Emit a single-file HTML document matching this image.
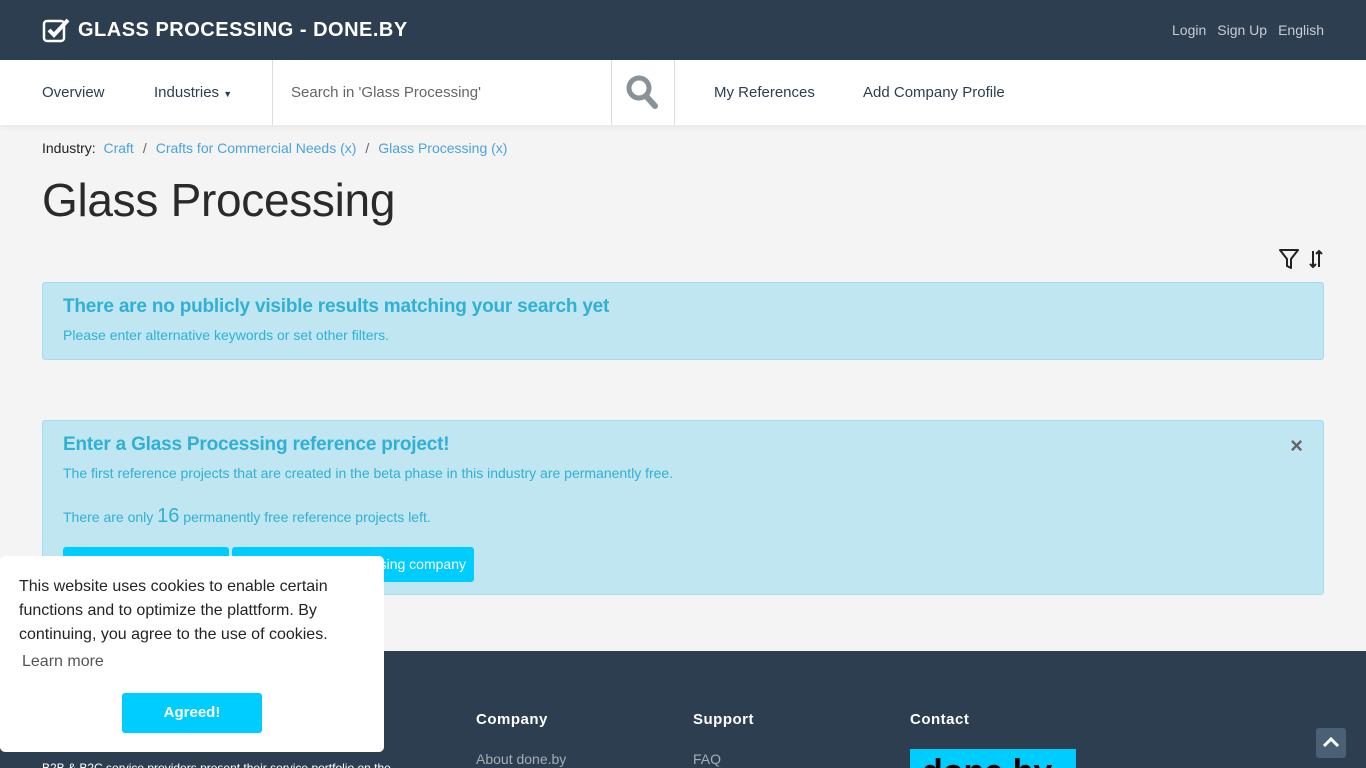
<!DOCTYPE html>
<html style="overflow:hidden"><head><meta charset="utf-8"><style>
*{box-sizing:border-box;margin:0;padding:0}
html,body{width:1366px;height:768px;overflow:hidden}
body{background:#f4f4f4;font-family:"Liberation Sans",sans-serif;position:relative}
.top{height:60px;background:#2c3e50;position:relative}
.brand{position:absolute;left:42px;top:17px;color:#fff;font-weight:bold;font-size:20px;letter-spacing:0.5px;display:flex;align-items:center;gap:8px}
.tr{position:absolute;right:42px;top:22px;font-size:14px;color:#c8ccd2}
.tr span{margin-left:11px}
.nav{height:65px;background:#fff;position:relative;box-shadow:0 2px 6px rgba(0,0,0,.06)}
.nav .it{position:absolute;top:24px;font-size:15px;color:#2c3e50}
.search{position:absolute;left:272px;top:0;width:340px;height:65px;border-left:1px solid #ddd;border-right:1px solid #ddd;padding:24px 18px;color:#666;font-size:15px}
.sbtn{position:absolute;left:611px;top:0;width:64px;height:65px;border-right:1px solid #ddd}
.bc{position:absolute;left:42px;top:140px;font-size:14px;color:#222}
.bc a{color:#4aa3df;text-decoration:none}
.bc i{font-style:normal;color:#666;margin:0 9px}
h1{position:absolute;left:42px;top:173px;font-size:46px;font-weight:normal;color:#2a2a2a;letter-spacing:-0.3px}
.alert{position:absolute;left:42px;width:1282px;background:#bfe6f1;border:1px solid #a6dcee;border-radius:3px;color:#31b0d5;padding:0 20px}
.alert h4{font-size:19px;font-weight:bold;margin-top:13px;letter-spacing:-0.2px}
.alert p{font-size:14px}
.btn{position:absolute;top:126px;height:35px;background:#00cdff;border-radius:3px;color:#fff;font-size:14px;padding:9px 13px;text-align:right;white-space:nowrap;overflow:hidden}
.foot{position:absolute;top:651px;left:0;width:1366px;height:117px;background:#2c3e50;overflow:hidden}
.foot h5{position:absolute;top:60px;color:#fff;font-size:15px;font-weight:bold;letter-spacing:.5px}
.foot .l{position:absolute;top:100px;color:#a5adb8;font-size:14px}
.cookie{position:absolute;left:0;top:556px;width:384px;height:196px;background:#fff;border-radius:5px;padding:19px 19px;color:#232323;font-size:16px;line-height:24px}
.agree{position:absolute;left:122px;top:137px;width:140px;height:40px;background:#00cdff;border-radius:3px;color:#fff;font-weight:bold;font-size:15px;text-align:center;line-height:40px}
.up{position:absolute;left:1316px;top:728px;width:30px;height:30px;background:#4a6075;border-radius:3px}
</style></head><body>
<div class="top">
<div class="brand"><svg width="28" height="26" viewBox="0 0 28 26"><rect x="2" y="4" width="20" height="20" rx="3" fill="none" stroke="#fff" stroke-width="2.5"/><path d="M7 13l5 5L26 3" fill="none" stroke="#fff" stroke-width="4"/></svg>GLASS PROCESSING - DONE.BY</div>
<div class="tr"><span>Login</span><span>Sign Up</span><span>English</span></div>
</div>
<div class="nav">
<div class="it" style="left:42px">Overview</div>
<div class="it" style="left:154px">Industries <span style="font-size:9px">▼</span></div>
<div class="search">Search in 'Glass Processing'</div>
<div class="sbtn"><svg width="64" height="65" viewBox="0 0 64 65"><circle cx="28" cy="28" r="10" fill="none" stroke="#8a9299" stroke-width="5"/><path d="M35 36l9 10" stroke="#8a9299" stroke-width="6" stroke-linecap="round"/></svg></div>
<div class="it" style="left:714px">My References</div>
<div class="it" style="left:863px">Add Company Profile</div>
</div>
<div class="bc">Industry: &nbsp;<a>Craft</a><i>/</i><a>Crafts for Commercial Needs (x)</a><i>/</i><a>Glass Processing (x)</a></div>
<h1>Glass Processing</h1>
<svg style="position:absolute;left:1278px;top:247px" width="48" height="24" viewBox="0 0 48 24"><path d="M2 3h18l-7 9v9l-4-2v-7z" fill="none" stroke="#222" stroke-width="2" stroke-linejoin="round"/><path d="M35 4v16m-3-3l3 3 3-3M41 20V4m-3 3l3-3 3 3" fill="none" stroke="#222" stroke-width="2"/></svg>
<div class="alert" style="top:282px;height:78px"><h4>There are no publicly visible results matching your search yet</h4><p style="margin-top:9px">Please enter alternative keywords or set other filters.</p></div>
<div class="alert" style="top:420px;height:175px"><h4>Enter a Glass Processing reference project!</h4>
<span style="position:absolute;right:20px;top:12px;color:#666;font-size:22px;font-weight:bold">×</span>
<p style="margin-top:9px">The first reference projects that are created in the beta phase in this industry are permanently free.</p>
<p style="margin-top:24px">There are only <span style="font-size:20px">16</span> permanently free reference projects left.</p>
<div class="btn" style="left:20px;width:166px">Create reference</div>
<div class="btn" style="left:189px;width:242px">Register glass processing company</div>
</div>
<div class="foot">
<h5 style="left:476px">Company</h5><h5 style="left:693px">Support</h5><h5 style="left:910px">Contact</h5>
<div class="l" style="left:476px">About done.by</div><div class="l" style="left:693px">FAQ</div>
<div style="position:absolute;left:910px;top:98px;width:166px;height:19px;background:#00cdff;overflow:hidden"><span style="position:absolute;left:12px;top:4px;font-size:34px;font-weight:bold;color:#000">done.by</span></div>
<div style="position:absolute;left:42px;top:110px;color:#fff;font-size:12px">B2B &amp; B2C service providers present their service portfolio on the</div>
</div>
<div class="cookie">This website uses cookies to enable certain functions and to optimize the plattform. By continuing, you agree to the use of cookies.<div style="color:#555;margin-top:3px;margin-left:3px">Learn more</div><div class="agree">Agreed!</div></div>
<div class="up"><svg width="30" height="30"><path d="M8 18l7-7 7 7" fill="none" stroke="#fff" stroke-width="3"/></svg></div>
</body></html>
